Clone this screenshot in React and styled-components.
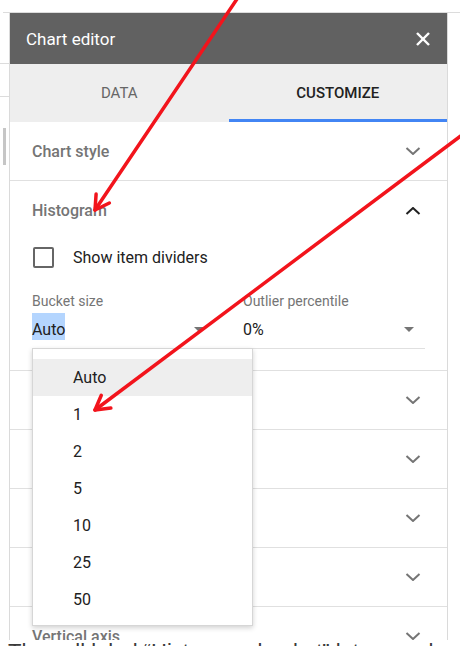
import React from 'react'
import styled, {createGlobalStyle} from 'styled-components'

// the first four rows sit under the open bucket menu, so only their chevrons show
const sections = ['', '', '', '', 'Vertical axis']
const buckets = ['Auto', '1', '2', '5', '10', '25', '50']

function Chevron({up}) {
  return (
    <ChevronSvg viewBox="0 0 16 8" $up={up}>
      <polyline points={up ? '1.5,7 8,1 14.5,7' : '1.5,1 8,7 14.5,1'} />
    </ChevronSvg>
  )
}

function Caret() {
  return (
    <CaretSvg viewBox="0 0 10 5">
      <polygon points="0,0 10,0 5,5" />
    </CaretSvg>
  )
}

function Arrow({x1, y1, x2, y2}) {
  // arrowhead barbs, 30 degrees off the shaft
  const len = Math.hypot(x2 - x1, y2 - y1)
  const bx = (x1 - x2) / len
  const by = (y1 - y2) / len
  const c = Math.cos(Math.PI / 6)
  const s = Math.sin(Math.PI / 6)
  const h = 16
  const a = [x2 + h * (c * bx - s * by), y2 + h * (s * bx + c * by)]
  const b = [x2 + h * (c * bx + s * by), y2 + h * (-s * bx + c * by)]
  return (
    <g>
      <line x1={x1} y1={y1} x2={x2} y2={y2} />
      <polyline points={`${a[0]},${a[1]} ${x2},${y2} ${b[0]},${b[1]}`} />
    </g>
  )
}

export default function App() {
  return (
    <Page>
      <GlobalStyle />
      <TopStrip />
      <BodyRow>
        <Gutter>
          <GutterLine $mt={50} />
          <GutterLine $mt={32} />
          <ScrollThumb />
        </Gutter>
        <Panel>
          <Header>
            <Title>Chart editor</Title>
            <CloseSvg viewBox="0 0 14 14">
              <line x1="1" y1="1" x2="13" y2="13" />
              <line x1="13" y1="1" x2="1" y2="13" />
            </CloseSvg>
          </Header>
          <Tabs>
            <Tab>DATA</Tab>
            <Tab $active>CUSTOMIZE</Tab>
          </Tabs>
          <Section>
            <SectionTitle>Chart style</SectionTitle>
            <Chevron />
          </Section>
          <OpenSection>
            <SectionHead>
              <SectionTitle>Histogram</SectionTitle>
              <Chevron up />
            </SectionHead>
            <CheckRow>
              <CheckBox />
              <CheckLabel>Show item dividers</CheckLabel>
            </CheckRow>
            <Fields>
              <Field>
                <FieldLabel>Bucket size</FieldLabel>
                <FieldValue>
                  <Value $selected>Auto</Value>
                  <Caret />
                </FieldValue>
                <Menu>
                  {buckets.map((b, i) => (
                    <MenuItem key={b} $hover={i === 0}>{b}</MenuItem>
                  ))}
                </Menu>
              </Field>
              <Field>
                <FieldLabel>Outlier percentile</FieldLabel>
                <FieldValue>
                  <Value>0%</Value>
                  <Caret />
                </FieldValue>
              </Field>
            </Fields>
          </OpenSection>
          {sections.map((s, i) => (
            <Section key={i}>
              <SectionTitle>{s}</SectionTitle>
              <Chevron />
            </Section>
          ))}
        </Panel>
        <RightGutter />
      </BodyRow>
      <Caption>The cell label “Histogram bucket” lets you choose the size</Caption>
      <Arrows viewBox="0 0 460 646">
        <Arrow x1={239} y1={-4} x2={95} y2={210} />
        <Arrow x1={466} y1={132} x2={95} y2={410} />
      </Arrows>
    </Page>
  )
}

const GlobalStyle = createGlobalStyle`
html, body {
  margin:0;
  padding:0;
  background:#fff;
}
body {
  font-family: Roboto, "Liberation Sans", Arial, sans-serif;
}
`
const Page = styled.div`
position:relative;
width:460px;
height:646px;
overflow:hidden;
background:#fff;
`
const TopStrip = styled.div`
height:13px;
margin-left:3px;
border-bottom:1px solid #dcdcdc;
box-sizing:border-box;
`
const BodyRow = styled.div`
display:flex;
height:627px;
overflow:hidden;
`
const Gutter = styled.div`
width:9px;
display:flex;
flex-direction:column;
`
const GutterLine = styled.div`
height:1px;
margin-top:${p => p.$mt}px;
background:#dcdcdc;
`
const ScrollThumb = styled.div`
width:3px;
height:37px;
margin:31px 0 0 3px;
background:#c6c6c6;
`
const RightGutter = styled.div`
flex:1;
`
const Panel = styled.div`
width:437px;
border-left:1px solid #dadada;
border-right:1px solid #dadada;
display:flex;
flex-direction:column;
flex-shrink:0;
`
const Header = styled.div`
height:51px;
flex-shrink:0;
background:#616161;
display:flex;
align-items:center;
justify-content:space-between;
padding:0 17px 0 16px;
`
const Title = styled.span`
color:#fff;
font-size:17px;
`
const CloseSvg = styled.svg`
width:14px;
height:14px;
stroke:#fff;
stroke-width:2.4;
`
const Tabs = styled.div`
height:58px;
flex-shrink:0;
background:#eeeeee;
display:grid;
grid-template-columns:1fr 1fr;
`
const Tab = styled.div`
display:flex;
align-items:center;
justify-content:center;
padding-top:3px;
font-size:15px;
font-weight:${p => (p.$active ? 500 : 400)};
color:${p => (p.$active ? '#212121' : '#666')};
border-bottom:3px solid ${p => (p.$active ? '#4285f4' : 'transparent')};
`
const Section = styled.div`
height:59px;
flex-shrink:0;
box-sizing:border-box;
border-bottom:1px solid #e0e0e0;
display:flex;
align-items:center;
justify-content:space-between;
padding:0 26px 0 22px;
`
const SectionTitle = styled.span`
font-size:16px;
font-weight:500;
color:#757575;
`
const ChevronSvg = styled.svg`
width:16px;
height:8px;
fill:none;
stroke:${p => (p.$up ? '#212121' : '#757575')};
stroke-width:2;
`
const OpenSection = styled.div`
flex-shrink:0;
border-bottom:1px solid #e0e0e0;
padding:0 0 21px;
`
const SectionHead = styled.div`
height:59px;
display:flex;
align-items:center;
justify-content:space-between;
padding:0 26px 0 22px;
`
const CheckRow = styled.div`
height:34px;
display:flex;
align-items:center;
gap:19px;
padding-left:23px;
`
const CheckBox = styled.div`
width:17px;
height:17px;
border:2px solid #666;
border-radius:2px;
`
const CheckLabel = styled.span`
font-size:16px;
color:#212121;
`
const Fields = styled.div`
display:grid;
grid-template-columns:183px 182px;
column-gap:28px;
padding:18px 0 0 22px;
`
const Field = styled.div`
position:relative;
`
const FieldLabel = styled.div`
font-size:14px;
line-height:18px;
color:#757575;
`
const FieldValue = styled.div`
margin-top:3px;
height:27px;
padding-bottom:8px;
padding-right:11px;
border-bottom:1px solid #e0e0e0;
display:flex;
align-items:flex-start;
justify-content:space-between;
font-size:16px;
color:#212121;
`
const Value = styled.span`
display:inline-block;
height:27px;
box-sizing:border-box;
padding-top:6px;
line-height:21px;
background:${p => (p.$selected ? '#b4d5fe' : 'transparent')};
`
const CaretSvg = styled.svg`
width:10px;
height:5px;
margin-top:14px;
fill:#757575;
`
const Menu = styled.div`
position:absolute;
z-index:2;
left:0;
top:calc(100% - 1px);
width:221px;
box-sizing:border-box;
padding:10px 0 7px;
background:#fff;
border:1px solid #d6d6d6;
box-shadow:0 2px 5px rgba(0,0,0,0.18);
`
const MenuItem = styled.div`
height:37px;
display:flex;
align-items:center;
padding-left:40px;
font-size:16px;
color:#212121;
background:${p => (p.$hover ? '#eeeeee' : 'transparent')};
`
const Caption = styled.div`
padding:1px 0 0 8px;
font-family:"Liberation Sans", Arial, sans-serif;
font-size:22px;
line-height:22px;
color:#3a3a3a;
white-space:nowrap;
`
const Arrows = styled.svg`
position:absolute;
left:0;
top:0;
width:460px;
height:646px;
z-index:5;
pointer-events:none;
fill:none;
stroke:#f2141c;
stroke-width:3.5;
stroke-linecap:round;
stroke-linejoin:round;
`
